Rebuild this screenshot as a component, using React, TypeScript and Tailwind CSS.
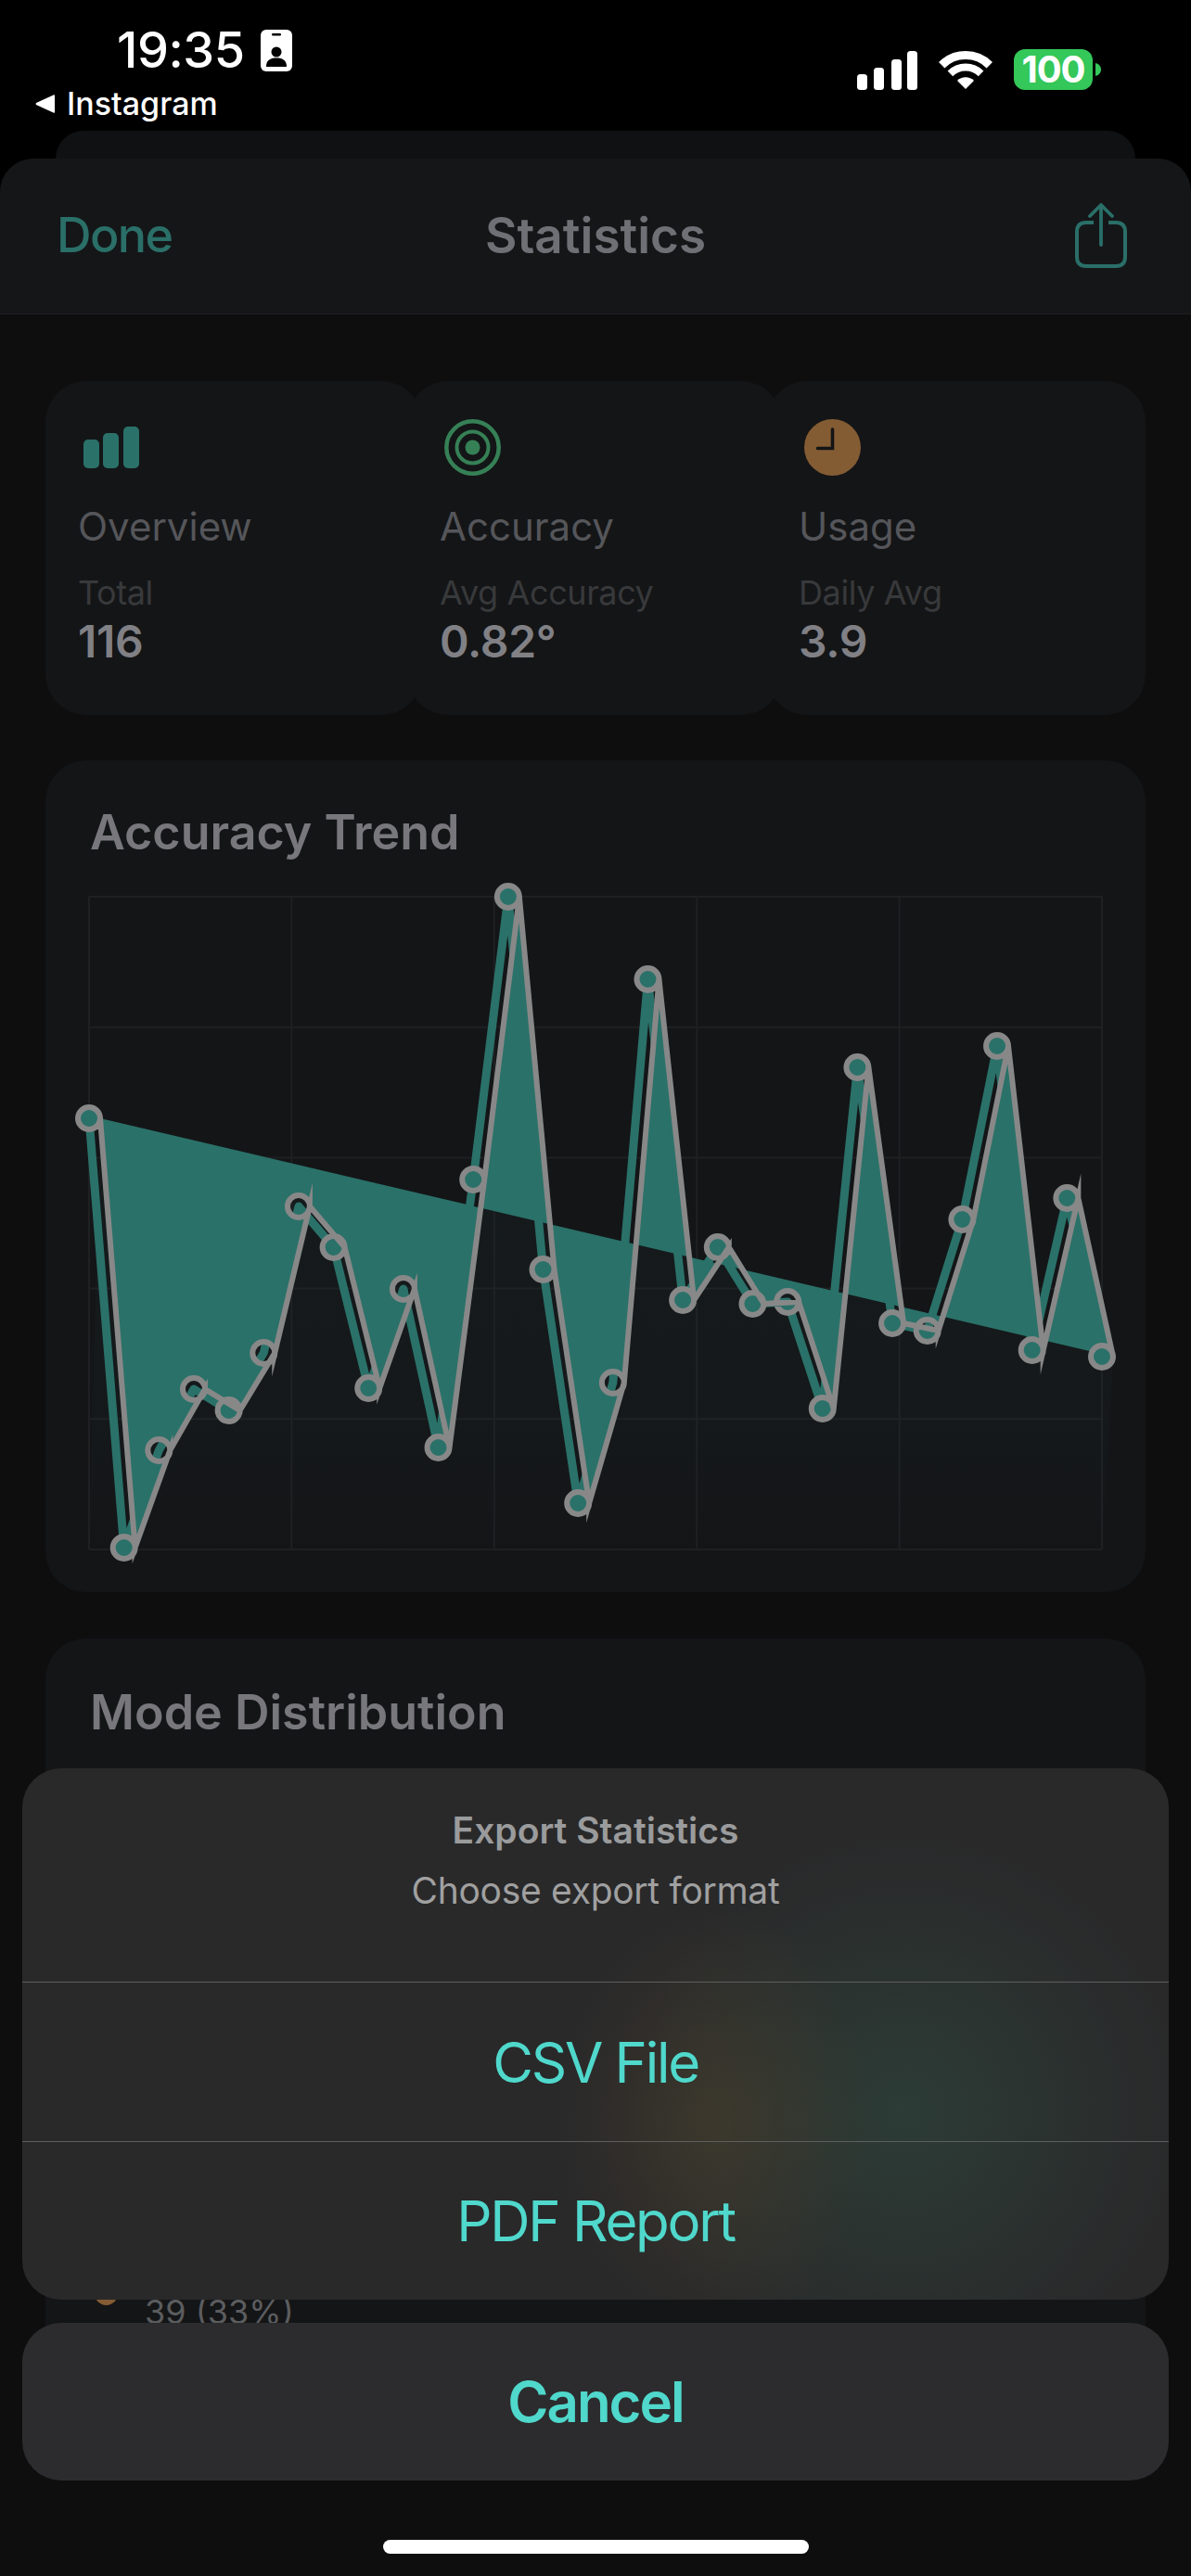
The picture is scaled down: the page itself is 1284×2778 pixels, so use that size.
import React from "react";

const STEP = 1092 / 29;
// chart values, read off the grid (0 = top of the plot, 704 = bottom)
const values = [
  239, 702, 597, 531, 554, 492, 334, 378, 530, 423, 594, 305, 0, 402, 654, 524,
  89, 435, 378, 439, 437, 552, 184, 460, 468, 348, 161, 489, 325, 496,
];
const R = 12;
const points = values.map((y, i) => [i * STEP, y] as const);
const circle = (x: number, y: number) =>
  `A${R} ${R} 0 1 1 ${x - R} ${y} A${R} ${R} 0 1 1 ${x + R} ${y}`;
const dotsPath = points
  .map(([x, y], i) => `${i === 0 ? "M" : "L"}${x + R} ${y} ${circle(x, y)}`)
  .join(" ");
const linePath = points.map(([x, y], i) => `${i === 0 ? "M" : "L"}${x} ${y}`).join(" ");
const first = points[0];
const last = points[points.length - 1];

function TrendChart() {
  return (
    <svg
      width={1092}
      height={704}
      viewBox="0 0 1092 704"
      className="ml-[47px] overflow-visible"
    >
      <defs>
        <linearGradient id="tint" gradientUnits="userSpaceOnUse" x1="0" y1="240" x2="0" y2="704">
          <stop offset="0" stopColor="#1c3a3a" stopOpacity="0.14" />
          <stop offset="0.7" stopColor="#1c3a3a" stopOpacity="0.1" />
          <stop offset="1" stopColor="#1c3a3a" stopOpacity="0" />
        </linearGradient>
      </defs>
      {[0, 1, 2, 3, 4, 5].map((i) => (
        <line key={`h${i}`} x1={0} x2={1092} y1={i * 140.8} y2={i * 140.8} stroke="#1e2022" strokeWidth={2} />
      ))}
      {[0, 1, 2, 3, 4, 5].map((i) => (
        <line key={`v${i}`} x1={i * 218.4} x2={i * 218.4} y1={0} y2={704} stroke="#1e2022" strokeWidth={2} />
      ))}
      <polygon
        points={`${first[0] + R},${first[1]} ${last[0] + R},${last[1]} ${last[0]},704 0,704`}
        fill="url(#tint)"
      />
      <path d={`${dotsPath} Z`} fill="#2a7169" />
      <path d={linePath} fill="none" stroke="#2a7169" strokeWidth={9} strokeLinejoin="round" />
      <path d={dotsPath} fill="none" stroke="#888888" strokeWidth={6} strokeMiterlimit={10} />
    </svg>
  );
}

function StatusBar() {
  return (
    <div className="flex h-[141px] justify-between bg-black text-white">
      <div className="pl-[38px] pt-[24px]">
        <div className="flex items-center pl-[88px]">
          <span className="text-[54px] leading-[60px] font-medium tracking-[-0.5px]">19:35</span>
          <svg width={34} height={45} viewBox="0 0 34 45" className="ml-[17px]">
            <rect width={34} height={45} rx={6} fill="#fff" />
            <rect x={12} y={4} width={10} height={2.5} rx={1.2} fill="#000" />
            <circle cx={17} cy={24} r={5.5} fill="#000" />
            <path d="M6 40c0-7 4-9.5 11-9.5S28 33 28 40Z" fill="#000" />
          </svg>
        </div>
        <div className="mt-[6px] flex items-center">
          <svg width={21} height={20} viewBox="0 0 21 20">
            <path d="M21 1 L21 19 Q21 20 19.5 19.5 L1 11 Q0 10 1 9 L19.5 0.5 Q21 0 21 1Z" fill="#fff" />
          </svg>
          <span className="ml-[13px] text-[34px] leading-[44px] font-medium">Instagram</span>
        </div>
      </div>
      <div className="flex items-start pr-[97px] pt-[53px]">
        <svg width={66} height={43} viewBox="0 0 66 43" className="mt-[1px]">
          <rect x={0} y={26} width={11} height={17} rx={3.5} fill="#fff" />
          <rect x={18} y={19} width={11} height={24} rx={3.5} fill="#fff" />
          <rect x={37} y={10} width={11} height={33} rx={3.5} fill="#fff" />
          <rect x={54} y={1} width={11} height={42} rx={3.5} fill="#fff" />
        </svg>
        <svg width={58} height={43} viewBox="-29 -42 58 43" className="ml-[22px] mt-[1px]">
          <path d="M-25.8 -25.8 A36.5 36.5 0 0 1 25.8 -25.8" fill="none" stroke="#fff" strokeWidth={9} />
          <path d="M-16.6 -16.6 A23.5 23.5 0 0 1 16.6 -16.6" fill="none" stroke="#fff" strokeWidth={8} />
          <path d="M0 0 L-9 -9 A12.7 12.7 0 0 1 9 -9 Z" fill="#fff" />
        </svg>
        <div className="ml-[23px] flex h-[44px] w-[85px] items-center justify-center rounded-[12px] bg-[#34c759]">
          <span className="text-[40px] leading-[44px] font-bold tracking-[-1px]">100</span>
        </div>
        <svg width={6} height={14} viewBox="0 0 6 14" className="ml-[3px] mt-[15px]">
          <path d="M0 0 C4 1 6 4 6 7 C6 10 4 13 0 14Z" fill="#34c759" />
        </svg>
      </div>
    </div>
  );
}

function BarsIcon() {
  return (
    <svg width={61} height={61} viewBox="0 0 61 61" className="ml-[5px]">
      <rect x={1} y={22} width={17} height={31} rx={5} fill="#2a7169" />
      <rect x={22} y={15} width={17} height={38} rx={5} fill="#2a7169" />
      <rect x={44} y={8} width={17} height={45} rx={5} fill="#2a7169" />
    </svg>
  );
}

function TargetIcon() {
  return (
    <svg width={61} height={61} viewBox="0 0 61 61" className="ml-[5px]">
      <circle cx={30.5} cy={30.5} r={28.2} fill="none" stroke="#368056" strokeWidth={4.5} />
      <circle cx={30.5} cy={30.5} r={17} fill="none" stroke="#368056" strokeWidth={4} />
      <circle cx={30.5} cy={30.5} r={8} fill="#368056" />
    </svg>
  );
}

function ClockIcon() {
  return (
    <svg width={61} height={61} viewBox="0 0 61 61" className="ml-[6px]">
      <circle cx={30.5} cy={30.5} r={30.5} fill="#845c33" />
      <path d="M30.5 11 V31.5 H14.5" fill="none" stroke="#141517" strokeWidth={3.6} strokeLinecap="round" />
    </svg>
  );
}

const stats = [
  { title: "Overview", label: "Total", value: "116", icon: <BarsIcon />, box: "w-[406px]" },
  { title: "Accuracy", label: "Avg Accuracy", value: "0.82°", icon: <TargetIcon />, box: "-ml-[16px] w-[404px]" },
  { title: "Usage", label: "Daily Avg", value: "3.9", icon: <ClockIcon />, box: "-ml-[17px] w-[409px]" },
];

export default function App() {
  return (
    <div className="relative h-[2778px] w-[1284px] overflow-hidden bg-black font-['Inter',sans-serif]">
      <StatusBar />
      <div className="mx-[60px] h-[30px] rounded-t-[36px] bg-[#101112]" />
      <div className="h-[2607px] rounded-t-[36px] bg-[#0e0e0f]">
        {/* Nav bar */}
        <div className="relative flex h-[168px] items-center justify-between rounded-t-[36px] border-b border-[#1f2022] bg-[#151618] pl-[61px] pr-[69px]">
          <span className="-mt-[1px] text-[52px] leading-[60px] font-medium tracking-[-1.6px] text-[#2a6f68]">Done</span>
          <span className="absolute left-0 right-0 -mt-[1px] text-center text-[53px] leading-[60px] font-semibold text-[#6f7075]">
            Statistics
          </span>
          <svg width={56} height={72} viewBox="0 0 56 72" className="-mt-[32px] translate-y-[15px]">
            <path d="M20 22 H12 Q2 22 2 32 V59 Q2 69 12 69 H44 Q54 69 54 59 V32 Q54 22 44 22 H36" fill="none" stroke="#2a6f68" strokeWidth={4} />
            <path d="M28 46 V3 M16 15 L28 3 L40 15" fill="none" stroke="#2a6f68" strokeWidth={3.8} strokeLinecap="round" strokeLinejoin="round" />
          </svg>
        </div>

        <div className="px-[49px] pt-[72px]">
          {/* Stat cards */}
          <div className="flex">
            {stats.map((s) => (
              <div key={s.title} className={`${s.box} h-[360px] rounded-[44px] bg-[#141517] pl-[35px] pt-[41px]`}>
                {s.icon}
                <div className="mt-[30px] text-[42px] leading-[50px] text-[#55565a]">{s.title}</div>
                <div className="mt-[24px] text-[36px] leading-[44px] tracking-[-0.4px] text-[#38393b]">{s.label}</div>
                <div className="mt-[3px] text-[48px] leading-[56px] font-semibold tracking-[-0.3px] text-[#808085]">{s.value}</div>
              </div>
            ))}
          </div>

          {/* Accuracy trend */}
          <div className="mt-[49px] h-[897px] rounded-[44px] bg-[#141517] pt-[48px]">
            <div className="pl-[48px] text-[52px] leading-[60px] font-semibold text-[#77777c]">Accuracy Trend</div>
            <div className="mt-[39px]">
              <TrendChart />
            </div>
          </div>

          {/* Mode distribution, mostly covered by the sheet */}
          <div className="mt-[50px] h-[873px] rounded-[44px] bg-[#141517] pt-[50px]">
            <div className="pl-[48px] text-[52px] leading-[60px] font-semibold text-[#77777c]">Mode Distribution</div>
            <div className="mt-[584px] flex items-start pl-[53px]">
              <div className="h-[25px] w-[25px] rounded-full bg-[#845c33]" />
              <span className="ml-[29px] mt-[10px] text-[36px] leading-[44px] text-[#5b5c5e]">39 (33%)</span>
            </div>
          </div>
        </div>
      </div>

      {/* Action sheet */}
      <div className="absolute left-[24px] top-[1907px] flex w-[1236px] flex-col gap-[25px]">
        <div className="flex h-[573px] flex-col overflow-hidden rounded-[42px] bg-[#29292a] bg-[radial-gradient(ellipse_170px_230px_at_745px_380px,rgba(85,68,42,0.42),transparent),radial-gradient(ellipse_300px_300px_at_950px_370px,rgba(48,78,66,0.5),transparent)]">
          <div className="flex h-[231px] flex-col items-center border-b border-[#5d5e5e] pt-[42px]">
            <span className="text-[39px] leading-[50px] font-semibold text-[#9a9b9c]">Export Statistics</span>
            <span className="mt-[15px] text-[39px] leading-[50px] tracking-[-0.3px] text-[#a0a0a0]">Choose export format</span>
          </div>
          <div className="flex h-[172px] items-center justify-center border-b border-[#5d5e5e] text-[60px] tracking-[-2.3px] text-[#4fd8cb]">CSV File</div>
          <div className="flex flex-1 items-center justify-center text-[60px] tracking-[-2.3px] text-[#4fd8cb]">PDF Report</div>
        </div>
        <div className="flex h-[170px] items-center justify-center rounded-[42px] bg-[#2c2c2e] text-[60px] font-semibold tracking-[-2px] text-[#4fd8cb]">
          Cancel
        </div>
      </div>

      {/* Home indicator */}
      <div className="absolute bottom-[24px] left-[413px] h-[15px] w-[459px] rounded-full bg-white" />
    </div>
  );
}
